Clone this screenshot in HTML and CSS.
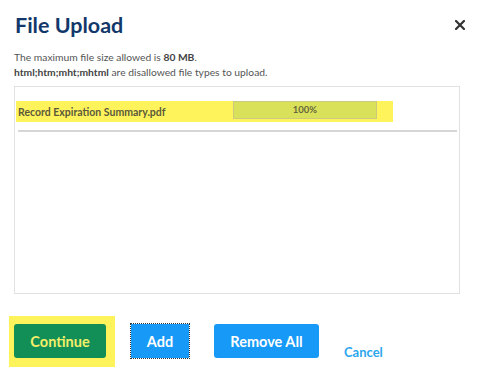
FILE: index.html
```html
<!DOCTYPE html>
<html lang="en">
<head>
    <meta charset="UTF-8">
    <title>File Upload</title>
    <link rel="stylesheet" href="styles.css">
</head>
<body>
    <div class="dialog">
        <div class="dialog-header">
            <h1>File Upload</h1>
            <svg class="close" width="10" height="10" viewBox="0 0 10 10">
                <path d="M1 1L9 9M9 1L1 9" stroke="#333" stroke-width="2.2" stroke-linecap="square"/>
            </svg>
        </div>

        <div class="notes">
            <p>The maximum file size allowed is <b>80 MB</b>.</p>
            <p><b>html;htm;mht;mhtml</b> are disallowed file types to upload.</p>
        </div>

        <div class="file-list">
            <div class="file-row">
                <span class="file-name">Record Expiration Summary.pdf</span>
                <div class="progress">100%</div>
            </div>
            <div class="divider"></div>
        </div>

        <div class="actions">
            <div class="highlight">
                <button class="btn btn-continue">Continue</button>
            </div>
            <button class="btn btn-blue btn-focus">Add</button>
            <button class="btn btn-blue btn-wide">Remove All</button>
            <a class="cancel" href="#">Cancel</a>
        </div>
    </div>
</body>
</html>
```

FILE: styles.css
```css
body {
    margin: 0;
    font-family: Lato, "Open Sans", sans-serif;
    background: #fff;
}
.dialog {
    width: 477px;
    height: 369px;
    padding: 0 17px 0 14px;
    box-sizing: border-box;
    overflow: hidden;
}
.dialog-header {
    display: flex;
    justify-content: space-between;
    align-items: center;
    padding-top: 12px;
}
.dialog-header h1 {
    margin: 0 0 0 1px;
    font-size: 21.5px;
    font-weight: bold;
    color: #12386b;
    line-height: 26px;
}
.close {
    margin-right: -5px;
    margin-top: -1px;
}
.notes {
    margin-top: 12px;
    color: #555;
    font-size: 10.3px;
}
.notes p {
    margin: 0;
    line-height: 15px;
}
.notes b {
    color: #444;
}
.file-list {
    box-sizing: border-box;
    margin-top: 6px;
    height: 208px;
    border: 1px solid #e2e2e2;
    padding: 14px 2px 0 1px;
}
.file-row {
    display: flex;
    align-items: center;
    width: 377px;
    height: 21px;
    background: #fff35c;
}
.file-name {
    width: 215px;
    padding-left: 2px;
    font-size: 10.5px;
    font-weight: bold;
    color: #5a5a3a;
}
.progress {
    width: 142px;
    height: 16px;
    margin-top: -3px;
    border: 1px solid #c9c980;
    background: #d9e15a;
    text-align: center;
    font-size: 9.5px;
    font-weight: bold;
    line-height: 16px;
    color: #666640;
}
.divider {
    margin: 8px 0 0 2px;
    border-top: 2px solid #d6d6d6;
}
.actions {
    display: flex;
    align-items: flex-start;
    margin-top: 22px;
    margin-left: -5px;
}
.highlight {
    background: #fff35c;
    padding: 8px 9px 9px 5px;
}
.btn {
    height: 34px;
    padding: 0;
    border: none;
    border-radius: 3px;
    font-family: Lato, "Open Sans", sans-serif;
    font-size: 14.5px;
    font-weight: bold;
    cursor: pointer;
}
.btn-continue {
    width: 92px;
    background: #118f56;
    color: #f3ef6a;
}
.btn-blue {
    margin-top: 8px;
    background: #1699f7;
    color: #fff;
}
.btn-focus {
    width: 58px;
    margin-left: 16px;
    border-radius: 0;
    outline: 1px dotted #333;
}
.btn-wide {
    width: 105px;
    margin-left: 25px;
}
.cancel {
    margin: 28px 0 0 25px;
    font-size: 13px;
    font-weight: bold;
    color: #2ba6ee;
    text-decoration: none;
}
```
